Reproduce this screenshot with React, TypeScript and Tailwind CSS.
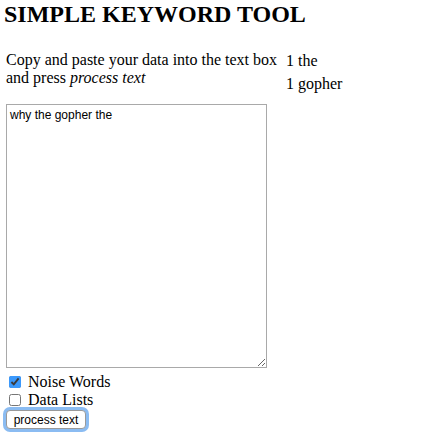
import { useState } from 'react';

export default function App() {
  const [text, setText] = useState('why the gopher the');
  const [noise, setNoise] = useState(true);
  const [lists, setLists] = useState(false);

  const results = [
    { count: 1, word: 'the' },
    { count: 1, word: 'gopher' },
  ];

  return (
    <div className="w-[440px] h-[445px] bg-white text-black font-['Liberation_Serif','Times_New_Roman',serif]">
      <h1 className="m-0 pl-[4px] text-[24px] leading-[28px] font-bold">SIMPLE KEYWORD TOOL</h1>

      <div className="flex mt-[23px]">
        {/* Left column: instructions + input */}
        <div className="w-[280px] pl-[6px]">
          <p className="w-[274px] text-[16px] leading-[18px]">
            Copy and paste your data into the text box and press <i>process text</i>
          </p>

          <textarea
            value={text}
            onChange={(e) => setText(e.target.value)}
            className="block mt-[17px] w-[261px] h-[264px] border border-[#a9a9a9] bg-white px-[3px] py-[3px] text-[12px] leading-[14px] text-black font-['Liberation_Sans',Arial,sans-serif] outline-none"
          />

          <label className="flex items-center mt-[5px] h-[18px] text-[16px] leading-[18px]">
            <input
              type="checkbox"
              checked={noise}
              onChange={(e) => setNoise(e.target.checked)}
              className="w-[12px] h-[12px] m-0 ml-[3px] mr-[7px] accent-[#3b99fc]"
            />
            Noise Words
          </label>
          <label className="flex items-center h-[18px] text-[16px] leading-[18px]">
            <input
              type="checkbox"
              checked={lists}
              onChange={(e) => setLists(e.target.checked)}
              className="w-[12px] h-[12px] m-0 ml-[3px] mr-[7px] accent-[#3b99fc]"
            />
            Data Lists
          </label>

          <button className="mt-[1px] h-[19px] w-[80px] flex items-center justify-center rounded-[4px] border border-[#9a9a9a] bg-white text-[12px] leading-[14px] text-black font-['Liberation_Sans',Arial,sans-serif] ring-[3px] ring-[#8bbcf2]">
            process text
          </button>
        </div>

        {/* Right column: word counts */}
        <div className="flex flex-col gap-[5px] pt-[1px] pl-[6px] text-[16px] leading-[18px]">
          {results.map((r) => (
            <div key={r.word}>
              {r.count} {r.word}
            </div>
          ))}
        </div>
      </div>
    </div>
  );
}
